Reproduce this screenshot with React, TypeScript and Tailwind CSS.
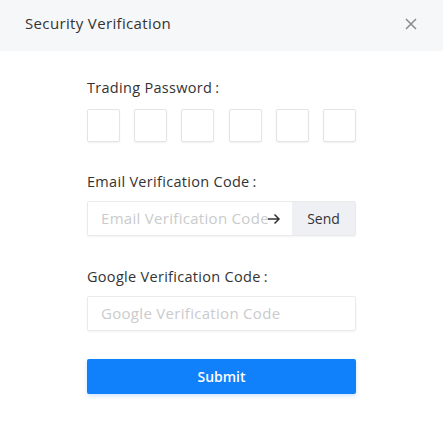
import React from "react";

export default function App() {
  const font = { fontFamily: '"Open Sans", "Noto Sans", sans-serif' };
  return (
    <div className="w-[443px] h-[436px] bg-white" style={font}>
      <div className="h-[51px] bg-[#f6f7f9] flex items-center justify-between pl-[25px] pr-[26px] pb-[5px]">
        <span className="text-[15px] text-[#333] tracking-[0.35px]">Security Verification</span>
        <svg width="12" height="12" viewBox="0 0 12 12" className="mt-[1px]">
          <path d="M1 1 L11 11 M11 1 L1 11" stroke="#8a8a8a" strokeWidth="1.5" />
        </svg>
      </div>
      <div className="w-[269px] mx-auto pt-[27px]">
        <div className="text-[14.5px] text-[#333] leading-[20px] tracking-[0.3px]">Trading Password<span className="ml-[3px]">:</span></div>
        <div className="mt-[11px] flex justify-between">
          {[0, 1, 2, 3, 4, 5].map((i) => (
            <div
              key={i}
              className="w-[33px] h-[33px] border border-[#e4e4e4] rounded-[2px] shadow-[0_1px_2px_rgba(0,0,0,0.06)] bg-white"
            />
          ))}
        </div>
        <div className="mt-[30px] text-[14.5px] text-[#333] leading-[20px] tracking-[0.3px]">Email Verification Code<span className="ml-[3px]">:</span></div>
        <div className="mt-[9px] h-[35px] flex border border-[#eaeaea] rounded-[2px] shadow-[0_1px_2px_rgba(0,0,0,0.05)]">
          <div className="relative flex-1 flex items-center pl-[13px] text-[15px] tracking-[0.3px] text-[#cacbcd] overflow-hidden whitespace-nowrap">
            Email Verification Code
            <svg width="14" height="12" viewBox="0 0 14 12" className="absolute left-[179px] top-[11px]">
              <path d="M1 6 H12 M7.5 1.5 L12 6 L7.5 10.5" stroke="#333" strokeWidth="1.5" fill="none" />
            </svg>
          </div>
          <div className="w-[63px] bg-[#eef0f3] flex items-center justify-center text-[14px] text-[#333]">Send</div>
        </div>
        <div className="mt-[31px] text-[14.5px] text-[#333] leading-[20px] tracking-[0.3px]">Google Verification Code<span className="ml-[3px]">:</span></div>
        <div className="mt-[9px] h-[35px] flex items-center border border-[#eaeaea] rounded-[2px] shadow-[0_1px_2px_rgba(0,0,0,0.05)] pl-[13px] text-[15px] tracking-[0.3px] text-[#cacbcd]">
          Google Verification Code
        </div>
        <button className="mt-[28px] w-full h-[35px] bg-[#1180fb] rounded-[2px] text-white text-[14px] font-semibold shadow-[0_2px_4px_rgba(17,128,251,0.2)]">
          Submit
        </button>
      </div>
    </div>
  );
}
